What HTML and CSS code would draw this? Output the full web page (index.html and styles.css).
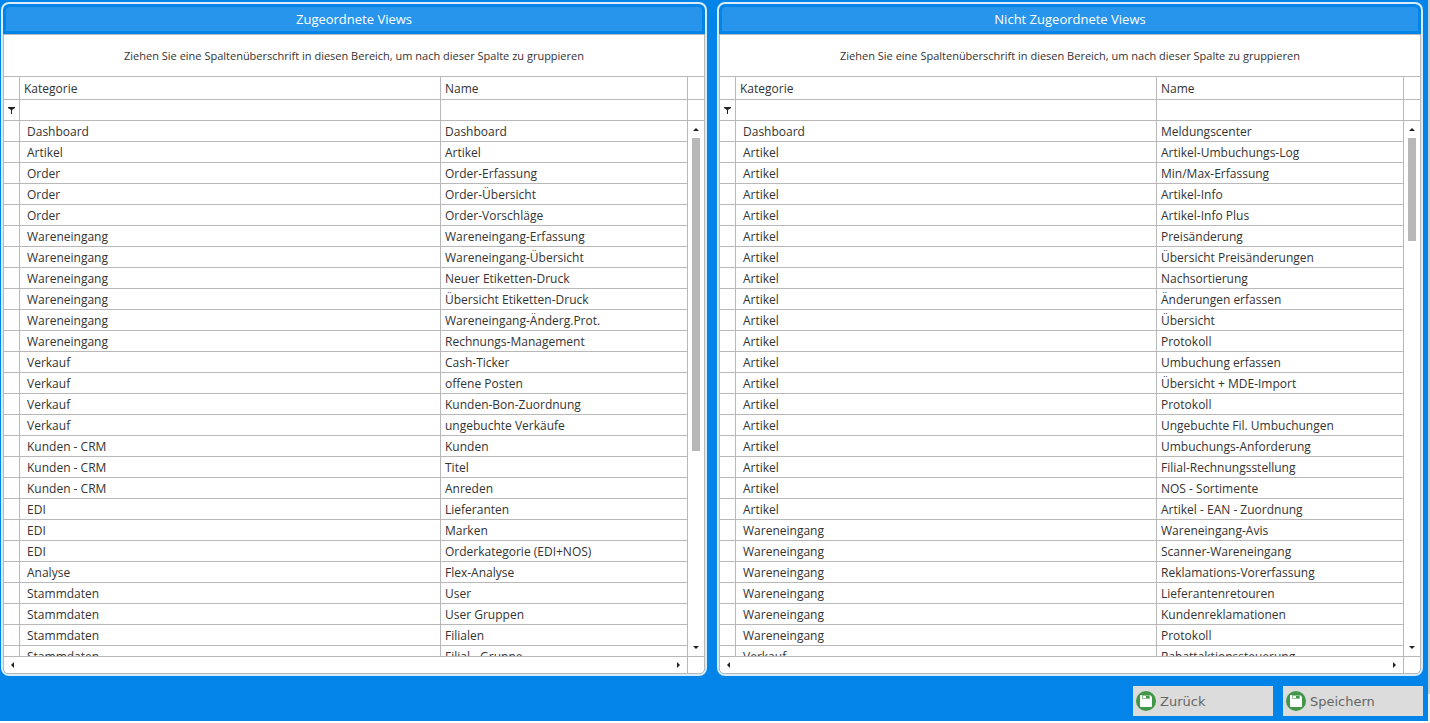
FILE: index.html
```html
<!DOCTYPE html>
<html lang="de"><head><meta charset="utf-8"><title>Views</title><link rel="stylesheet" href="styles.css"></head>
<body class="page">
<main class="stage">
<div class="panels">
<section class="panel">
<h2 class="panel-title">Zugeordnete Views</h2>
<div class="grid">
<p class="group-hint">Ziehen Sie eine Spaltenüberschrift in diesen Bereich, um nach dieser Spalte zu gruppieren</p>
<div class="grid-main">
<div class="table-clip">
<table class="table">
<colgroup><col class="col-mark"><col><col class="col-name"></colgroup>
<thead>
<tr class="head-row"><td></td><th scope="col">Kategorie</th><th scope="col">Name</th></tr>
<tr class="filter-row"><td><svg class="funnel" viewBox="0 0 7 7"><path d="M0 0H7V1L4 3V7H3V3L0 1Z"/></svg></td><td><input class="filter" type="text" aria-label="Kategorie filtern"></td><td><input class="filter" type="text" aria-label="Name filtern"></td></tr>
</thead>
<tbody>
<tr><td></td><td>Dashboard</td><td>Dashboard</td></tr>
<tr><td></td><td>Artikel</td><td>Artikel</td></tr>
<tr><td></td><td>Order</td><td>Order-Erfassung</td></tr>
<tr><td></td><td>Order</td><td>Order-Übersicht</td></tr>
<tr><td></td><td>Order</td><td>Order-Vorschläge</td></tr>
<tr><td></td><td>Wareneingang</td><td>Wareneingang-Erfassung</td></tr>
<tr><td></td><td>Wareneingang</td><td>Wareneingang-Übersicht</td></tr>
<tr><td></td><td>Wareneingang</td><td>Neuer Etiketten-Druck</td></tr>
<tr><td></td><td>Wareneingang</td><td>Übersicht Etiketten-Druck</td></tr>
<tr><td></td><td>Wareneingang</td><td>Wareneingang-Änderg.Prot.</td></tr>
<tr><td></td><td>Wareneingang</td><td>Rechnungs-Management</td></tr>
<tr><td></td><td>Verkauf</td><td>Cash-Ticker</td></tr>
<tr><td></td><td>Verkauf</td><td>offene Posten</td></tr>
<tr><td></td><td>Verkauf</td><td>Kunden-Bon-Zuordnung</td></tr>
<tr><td></td><td>Verkauf</td><td>ungebuchte Verkäufe</td></tr>
<tr><td></td><td>Kunden - CRM</td><td>Kunden</td></tr>
<tr><td></td><td>Kunden - CRM</td><td>Titel</td></tr>
<tr><td></td><td>Kunden - CRM</td><td>Anreden</td></tr>
<tr><td></td><td>EDI</td><td>Lieferanten</td></tr>
<tr><td></td><td>EDI</td><td>Marken</td></tr>
<tr><td></td><td>EDI</td><td>Orderkategorie (EDI+NOS)</td></tr>
<tr><td></td><td>Analyse</td><td>Flex-Analyse</td></tr>
<tr><td></td><td>Stammdaten</td><td>User</td></tr>
<tr><td></td><td>Stammdaten</td><td>User Gruppen</td></tr>
<tr><td></td><td>Stammdaten</td><td>Filialen</td></tr>
<tr><td></td><td>Stammdaten</td><td>Filial - Gruppe</td></tr>
</tbody>
</table>
</div>
<div class="side">
<div class="corner corner-head"></div><div class="corner corner-filter"></div>
<div class="vscroll"><span class="arrow up"></span><div class="track"><div class="thumb thumb-large"></div></div><span class="arrow down"></span></div>
</div>
</div>
<div class="hscroll"><div class="hbar"><span class="arrow left"></span><span class="arrow right"></span></div></div>
</div>
</section>
<section class="panel">
<h2 class="panel-title">Nicht Zugeordnete Views</h2>
<div class="grid">
<p class="group-hint">Ziehen Sie eine Spaltenüberschrift in diesen Bereich, um nach dieser Spalte zu gruppieren</p>
<div class="grid-main">
<div class="table-clip">
<table class="table">
<colgroup><col class="col-mark"><col><col class="col-name"></colgroup>
<thead>
<tr class="head-row"><td></td><th scope="col">Kategorie</th><th scope="col">Name</th></tr>
<tr class="filter-row"><td><svg class="funnel" viewBox="0 0 7 7"><path d="M0 0H7V1L4 3V7H3V3L0 1Z"/></svg></td><td><input class="filter" type="text" aria-label="Kategorie filtern"></td><td><input class="filter" type="text" aria-label="Name filtern"></td></tr>
</thead>
<tbody>
<tr><td></td><td>Dashboard</td><td>Meldungscenter</td></tr>
<tr><td></td><td>Artikel</td><td>Artikel-Umbuchungs-Log</td></tr>
<tr><td></td><td>Artikel</td><td>Min/Max-Erfassung</td></tr>
<tr><td></td><td>Artikel</td><td>Artikel-Info</td></tr>
<tr><td></td><td>Artikel</td><td>Artikel-Info Plus</td></tr>
<tr><td></td><td>Artikel</td><td>Preisänderung</td></tr>
<tr><td></td><td>Artikel</td><td>Übersicht Preisänderungen</td></tr>
<tr><td></td><td>Artikel</td><td>Nachsortierung</td></tr>
<tr><td></td><td>Artikel</td><td>Änderungen erfassen</td></tr>
<tr><td></td><td>Artikel</td><td>Übersicht</td></tr>
<tr><td></td><td>Artikel</td><td>Protokoll</td></tr>
<tr><td></td><td>Artikel</td><td>Umbuchung erfassen</td></tr>
<tr><td></td><td>Artikel</td><td>Übersicht + MDE-Import</td></tr>
<tr><td></td><td>Artikel</td><td>Protokoll</td></tr>
<tr><td></td><td>Artikel</td><td>Ungebuchte Fil. Umbuchungen</td></tr>
<tr><td></td><td>Artikel</td><td>Umbuchungs-Anforderung</td></tr>
<tr><td></td><td>Artikel</td><td>Filial-Rechnungsstellung</td></tr>
<tr><td></td><td>Artikel</td><td>NOS - Sortimente</td></tr>
<tr><td></td><td>Artikel</td><td>Artikel - EAN - Zuordnung</td></tr>
<tr><td></td><td>Wareneingang</td><td>Wareneingang-Avis</td></tr>
<tr><td></td><td>Wareneingang</td><td>Scanner-Wareneingang</td></tr>
<tr><td></td><td>Wareneingang</td><td>Reklamations-Vorerfassung</td></tr>
<tr><td></td><td>Wareneingang</td><td>Lieferantenretouren</td></tr>
<tr><td></td><td>Wareneingang</td><td>Kundenreklamationen</td></tr>
<tr><td></td><td>Wareneingang</td><td>Protokoll</td></tr>
<tr><td></td><td>Verkauf</td><td>Rabattaktionssteuerung</td></tr>
</tbody>
</table>
</div>
<div class="side">
<div class="corner corner-head"></div><div class="corner corner-filter"></div>
<div class="vscroll"><span class="arrow up"></span><div class="track"><div class="thumb thumb-small"></div></div><span class="arrow down"></span></div>
</div>
</div>
<div class="hscroll"><div class="hbar"><span class="arrow left"></span><span class="arrow right"></span></div></div>
</div>
</section>
</div>
<div class="actions">
<button class="action" type="button"><svg class="disk" viewBox="0 0 20 20"><circle cx="10" cy="10" r="10" fill="#419647"/><path d="M5 4H14L16 6V15Q16 16 15 16H5Q4 16 4 15V5Q4 4 5 4Z" fill="#fff"/><path d="M6 4H14V8H6Z" fill="#8cc090"/><path d="M7 5H13V7H7Z" fill="#fff"/><path d="M10 5H13V7H10Z" fill="#419647"/></svg><span class="action-label">Zurück</span></button>
<button class="action" type="button"><svg class="disk" viewBox="0 0 20 20"><circle cx="10" cy="10" r="10" fill="#419647"/><path d="M5 4H14L16 6V15Q16 16 15 16H5Q4 16 4 15V5Q4 4 5 4Z" fill="#fff"/><path d="M6 4H14V8H6Z" fill="#8cc090"/><path d="M7 5H13V7H7Z" fill="#fff"/><path d="M10 5H13V7H10Z" fill="#419647"/></svg><span class="action-label">Speichern</span></button>
</div>
</main>
<div class="page-scroll"><div class="page-thumb"></div></div>
</body></html>
```
FILE: styles.css
```css
* { box-sizing: border-box; }
.page { margin: 0; height: 100vh; display: flex; background: #fff; color: #333; font: 12px/18px "Open Sans", "Noto Sans", sans-serif; overflow: hidden; }
.stage { flex: 1; min-width: 0; margin-bottom: 2px; padding: 2px 5px 5px 1px; display: flex; flex-direction: column; gap: 10px; background: #0284e8; }
.panels { flex: 1; min-height: 0; display: grid; grid-template-columns: 1fr 1fr; gap: 10px; }
.panel { min-width: 0; min-height: 0; display: flex; flex-direction: column; border: 2px solid #d8ecfb; border-radius: 8px; overflow: hidden; background: #0284e8; }
.panel-title { margin: 3px; height: 24px; border-radius: 4px 4px 0 0; background: #2795ec; color: #fff; font-size: 13px; font-weight: 400; line-height: 24px; text-align: center; }
.grid { flex: 1; min-height: 0; display: flex; flex-direction: column; border: 1px solid #b8b8b8; border-radius: 0 0 5px 5px; background: #fff; }
.group-hint { margin: 0; height: 42px; border-bottom: 1px solid #b8b8b8; font-size: 11px; line-height: 42px; text-align: center; white-space: nowrap; }
.grid-main { flex: 1; min-height: 0; display: flex; }
.table-clip { flex: 1; min-width: 0; overflow: hidden; }
.table { width: 100%; table-layout: fixed; border-spacing: 0; }
.col-mark { width: 16px; }
.col-name { width: 247px; }
.table td, .table th { height: 21px; padding: 2px 4px 0; border-right: 1px solid #b8b8b8; border-bottom: 1px solid #b8b8b8; font-weight: 400; text-align: left; white-space: nowrap; overflow: hidden; }
.table td:first-child { padding: 0; }
.table tbody td:nth-child(2) { padding-left: 7px; }
.table .head-row td, .table .head-row th { height: 23px; }
.table .filter-row td { padding: 0; }
.funnel { display: block; width: 7px; height: 7px; margin: 0 auto; fill: #222; }
.filter { display: block; width: 100%; height: 20px; padding: 0 4px; border: 0; outline: 0; background: none; font: inherit; }
.side { width: 16px; display: flex; flex-direction: column; }
.corner { border-bottom: 1px solid #b8b8b8; }
.corner-head { height: 23px; }
.corner-filter { height: 21px; }
.vscroll { flex: 1; min-height: 0; display: flex; flex-direction: column; align-items: center; padding: 7px 0; gap: 7px; }
.track { flex: 1; width: 8px; }
.thumb { width: 8px; background: #b8b8b8; }
.thumb-large { height: 62.4%; }
.thumb-small { height: 20.5%; }
.arrow { width: 0; height: 0; border: 3px solid transparent; }
.up { border-top: 0; border-bottom-color: #222; }
.down { border-bottom: 0; border-top-color: #222; }
.left { border-left: 0; border-right-color: #222; }
.right { border-right: 0; border-left-color: #222; }
.hscroll { height: 17px; padding-right: 16px; border-top: 1px solid #b8b8b8; }
.hbar { height: 100%; padding: 0 7px; display: flex; justify-content: space-between; align-items: center; border-right: 1px solid #b8b8b8; }
.actions { display: flex; justify-content: flex-end; gap: 10px; }
.action { width: 140px; height: 30px; padding: 0 3px; display: flex; align-items: center; gap: 4px; border: 0; background: #dcdcdc; color: #666; font: 13px/20px "DejaVu Sans", sans-serif; }
.action-label { padding-top: 2px; }
.disk { width: 20px; height: 20px; }
.page-scroll { width: 2px; background: #f0f0f0; }
.page-thumb { height: 96%; background: #cdcdcd; }
```
